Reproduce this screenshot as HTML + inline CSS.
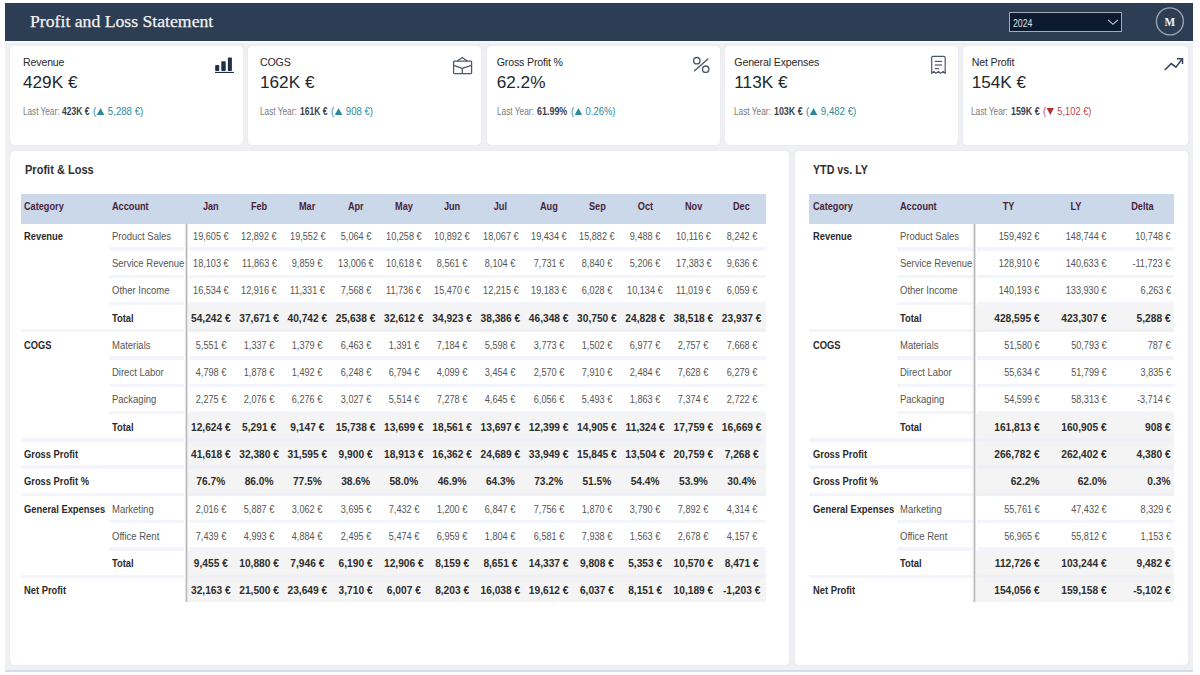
<!DOCTYPE html>
<html><head><meta charset="utf-8"><title>Profit and Loss Statement</title>
<style>
html,body{margin:0;padding:0;background:#ffffff;width:1200px;height:675px;overflow:hidden;}
body{position:relative;font-family:"Liberation Sans", sans-serif;}
div{position:absolute;box-sizing:border-box;white-space:nowrap;}
.frame{left:5px;top:3px;width:1188px;height:669px;background:#eef0f3;}
.fline{left:5px;top:670px;width:1188px;height:2px;background:#d4dee7;}
.header{left:5px;top:3px;width:1188px;height:38px;background:#2d3e54;}
.hstrip{left:5px;top:41px;width:1188px;height:2px;background:#f5f6f8;}
.title{left:30px;top:10px;font-family:"Liberation Serif", serif;font-size:17.7px;color:#f2f2f2;line-height:22px;-webkit-text-stroke:0.25px #f2f2f2;}
.dd{left:1009px;top:12px;width:113px;height:20px;background:#0c1a2f;border:1px solid #a3abb6;}
.ddt{left:1013px;top:16.6px;font-size:10.2px;color:#dde1e6;line-height:14px;}
.av{left:1155.8px;top:7.5px;width:28.5px;height:28.5px;border:1px solid #b9bfc8;border-radius:50%;}
.avt{left:1162.8px;top:14.2px;width:14px;text-align:center;font-family:"Liberation Serif", serif;font-weight:bold;font-size:12.5px;color:#f4f4f4;line-height:16px;}
.card{background:#ffffff;border-radius:4px;box-shadow:0 0 1px rgba(60,70,90,0.16);}
.panel{background:#ffffff;border-radius:4px;box-shadow:0 0 1px rgba(60,70,90,0.16);}
.kl{font-size:10.6px;color:#2a2a2a;line-height:14px;letter-spacing:-0.15px;}
.kv{font-size:17.2px;color:#222831;line-height:22px;}
.kly{font-size:10.2px;color:#7a7a7a;line-height:12px;}
.kly.kb{color:#3b414b;font-weight:bold;}
.kly.up{color:#2e8a98;}
.kly.dn{color:#c04545;}
.tu{display:inline-block;width:0;height:0;border-left:4px solid transparent;border-right:4px solid transparent;border-bottom:7px solid #2b8a99;margin:0 1px 0 0.5px;}
.td{display:inline-block;width:0;height:0;border-left:4px solid transparent;border-right:4px solid transparent;border-top:7px solid #b83232;margin:0 1px 0 0.5px;}
.ptitle{font-size:12px;font-weight:bold;color:#303030;line-height:16px;}
.hbg{background:#cad8ea;}
.ht{font-size:10.2px;font-weight:bold;color:#4a1f38;}
.bl{font-size:10px;font-weight:bold;color:#2b2b2b;}
.rl{font-size:10.1px;color:#555555;}
.rv{font-size:10.2px;color:#555555;}
.bv{font-size:10.2px;font-weight:bold;color:#2e2e2e;}
.vc{text-align:center;}
.vr{text-align:right;}
.gbg{background:#f4f4f4;}
.sep{background:#f4f5fc;}
.sepg{background:#eff0f7;}
.vl{width:3px;background:linear-gradient(90deg,#e3e3e3 0,#e3e3e3 1px,#b9b9b9 1px,#b9b9b9 2px,#e3e3e3 2px,#e3e3e3 3px);}
</style></head><body>
<div class="frame"></div>
<div class="fline"></div>
<div class="header"></div>
<div class="hstrip"></div>
<div class="title">Profit and Loss Statement</div>
<div class="dd"></div>
<div class="ddt"><span style="display:inline-block;transform:scaleX(0.86);transform-origin:left center">2024</span></div>
<svg width="1200" height="675" style="position:absolute;left:0;top:0"><polyline points="1108,19.8 1113,24.3 1118,19.8" fill="none" stroke="#c9ced6" stroke-width="1.1"/></svg>
<svg width="1200" height="675" style="position:absolute;left:0;top:0"><circle cx="1169.9" cy="21.4" r="13.5" fill="none" stroke="#9aa3ae" stroke-width="1.4"/></svg>
<div class="avt"><span style="display:inline-block;transform:scaleX(0.9)">M</span></div>
<div class="card" style="left:10px;top:46px;width:233.1px;height:99px"></div>
<div class="kl" style="left:23px;top:55px">Revenue</div>
<div class="kv" style="left:23px;top:71px">429K €</div>
<div class="kly" style="left:22.9px;top:105.6px"><span style="display:inline-block;transform:scaleX(0.8030);transform-origin:left center">Last Year:</span></div>
<div class="kly kb" style="left:62.3px;top:105.6px"><span style="display:inline-block;transform:scaleX(0.8339);transform-origin:left center">423K €</span></div>
<div class="kly up" style="left:93.2px;top:105.6px"><span style="display:inline-block;transform:scaleX(0.9449);transform-origin:left center">(<i class="tu"></i> 5,288 €)</span></div>
<svg width="1200" height="675" style="position:absolute;left:0;top:0"><g fill="#1f2f47"><rect x="215.2" y="64.9" width="4" height="6.2" rx="0.8"/><rect x="221.3" y="61.3" width="4.4" height="9.8" rx="0.8"/><rect x="227.9" y="57.6" width="4" height="13.5" rx="0.8"/><rect x="215" y="71.9" width="18.9" height="1.1"/></g></svg>
<div class="card" style="left:248.2px;top:46px;width:233.1px;height:99px"></div>
<div class="kl" style="left:260px;top:55px">COGS</div>
<div class="kv" style="left:260px;top:71px">162K €</div>
<div class="kly" style="left:260px;top:105.6px"><span style="display:inline-block;transform:scaleX(0.8097);transform-origin:left center">Last Year:</span></div>
<div class="kly kb" style="left:300.2px;top:105.6px"><span style="display:inline-block;transform:scaleX(0.8339);transform-origin:left center">161K €</span></div>
<div class="kly up" style="left:331.1px;top:105.6px"><span style="display:inline-block;transform:scaleX(0.9412);transform-origin:left center">(<i class="tu"></i> 908 €)</span></div>
<svg width="1200" height="675" style="position:absolute;left:0;top:0"><g fill="none" stroke="#4d5869" stroke-width="1.25" stroke-linejoin="round"><rect x="453.6" y="61.1" width="18" height="12.5" rx="0.8"/><polyline points="457.2,61.1 462.3,57.4 467.2,61.1"/><polyline points="453.6,65.3 462.3,68.3 471.6,65.3"/><line x1="462.3" y1="68.3" x2="462.3" y2="73.6"/></g></svg>
<div class="card" style="left:486.7px;top:46px;width:233.2px;height:99px"></div>
<div class="kl" style="left:496.7px;top:55px">Gross Profit %</div>
<div class="kv" style="left:496.7px;top:71px">62.2%</div>
<div class="kly" style="left:497px;top:105.6px"><span style="display:inline-block;transform:scaleX(0.8119);transform-origin:left center">Last Year:</span></div>
<div class="kly kb" style="left:536.7px;top:105.6px"><span style="display:inline-block;transform:scaleX(0.8767);transform-origin:left center">61.99%</span></div>
<div class="kly up" style="left:570.5px;top:105.6px"><span style="display:inline-block;transform:scaleX(0.9247);transform-origin:left center">(<i class="tu"></i> 0.26%)</span></div>
<svg width="1200" height="675" style="position:absolute;left:0;top:0"><g fill="none" stroke="#4d5869" stroke-width="1.35"><circle cx="696.8" cy="60.7" r="3.2"/><circle cx="705.7" cy="69.2" r="3.2"/><line x1="694.6" y1="70.7" x2="707.9" y2="58.9" stroke-linecap="round"/></g></svg>
<div class="card" style="left:724.8px;top:46px;width:233.4px;height:99px"></div>
<div class="kl" style="left:734.3px;top:55px">General Expenses</div>
<div class="kv" style="left:734.3px;top:71px">113K €</div>
<div class="kly" style="left:734.4px;top:105.6px"><span style="display:inline-block;transform:scaleX(0.8119);transform-origin:left center">Last Year:</span></div>
<div class="kly kb" style="left:774.1px;top:105.6px"><span style="display:inline-block;transform:scaleX(0.8704);transform-origin:left center">103K €</span></div>
<div class="kly up" style="left:805.6px;top:105.6px"><span style="display:inline-block;transform:scaleX(0.9449);transform-origin:left center">(<i class="tu"></i> 9,482 €)</span></div>
<svg width="1200" height="675" style="position:absolute;left:0;top:0"><g fill="none" stroke="#4d5869" stroke-width="1.2"><path d="M931.7 73.4 V57.6 Q931.7 56.4 932.9 56.4 H944 Q945.2 56.4 945.2 57.6 V73.4 L943.1 71.4 L940.6 73.4 L938.5 71.4 L936 73.4 L933.8 71.4 Z" stroke-linejoin="round"/><line x1="934.8" y1="61.4" x2="942" y2="61.4"/><line x1="934.8" y1="65" x2="942" y2="65"/><line x1="934.8" y1="68.6" x2="939" y2="68.6"/></g></svg>
<div class="card" style="left:963.1px;top:46px;width:225.3px;height:99px"></div>
<div class="kl" style="left:971.7px;top:55px">Net Profit</div>
<div class="kv" style="left:971.7px;top:71px">154K €</div>
<div class="kly" style="left:971.4px;top:105.6px"><span style="display:inline-block;transform:scaleX(0.8119);transform-origin:left center">Last Year:</span></div>
<div class="kly kb" style="left:1011.1px;top:105.6px"><span style="display:inline-block;transform:scaleX(0.8704);transform-origin:left center">159K €</span></div>
<div class="kly dn" style="left:1042.6px;top:105.6px"><span style="display:inline-block;transform:scaleX(0.9111);transform-origin:left center">(<i class="td"></i> 5,102 €)</span></div>
<svg width="1200" height="675" style="position:absolute;left:0;top:0"><g fill="none" stroke="#38455a" stroke-width="1.5" stroke-linejoin="miter"><polyline points="1164.8,70 1171.2,63.6 1175.9,67.1 1182.2,59"/><polyline points="1177,58.7 1182.5,58.7 1182.5,64"/></g></svg>
<div class="panel" style="left:10px;top:151px;width:779px;height:514px"></div>
<div class="panel" style="left:795px;top:151px;width:393px;height:514px"></div>
<div class="ptitle" style="left:24.6px;top:162px"><span style="display:inline-block;transform:scaleX(0.92);transform-origin:left center">Profit &amp; Loss</span></div>
<div class="ptitle" style="left:812.8px;top:162px"><span style="display:inline-block;transform:scaleX(0.89);transform-origin:left center">YTD vs. LY</span></div>
<div class="hbg" style="left:20.8px;top:194px;width:745.4px;height:29.8px"></div>
<div class="ht" style="left:24.2px;top:192.4px;height:29.4px;line-height:29.4px;text-align:left"><span style="display:inline-block;transform:scaleX(0.9);transform-origin:left center;">Category</span></div>
<div class="ht" style="left:112px;top:192.4px;height:29.4px;line-height:29.4px;text-align:left"><span style="display:inline-block;transform:scaleX(0.9);transform-origin:left center;">Account</span></div>
<div class="ht" style="left:186.7px;top:192.4px;width:48.26px;height:29.4px;line-height:29.4px;text-align:center"><span style="display:inline-block;transform:scaleX(0.9);transform-origin:center center;">Jan</span></div>
<div class="ht" style="left:234.96px;top:192.4px;width:48.26px;height:29.4px;line-height:29.4px;text-align:center"><span style="display:inline-block;transform:scaleX(0.9);transform-origin:center center;">Feb</span></div>
<div class="ht" style="left:283.22px;top:192.4px;width:48.26px;height:29.4px;line-height:29.4px;text-align:center"><span style="display:inline-block;transform:scaleX(0.9);transform-origin:center center;">Mar</span></div>
<div class="ht" style="left:331.48px;top:192.4px;width:48.26px;height:29.4px;line-height:29.4px;text-align:center"><span style="display:inline-block;transform:scaleX(0.9);transform-origin:center center;">Apr</span></div>
<div class="ht" style="left:379.74px;top:192.4px;width:48.26px;height:29.4px;line-height:29.4px;text-align:center"><span style="display:inline-block;transform:scaleX(0.9);transform-origin:center center;">May</span></div>
<div class="ht" style="left:428px;top:192.4px;width:48.26px;height:29.4px;line-height:29.4px;text-align:center"><span style="display:inline-block;transform:scaleX(0.9);transform-origin:center center;">Jun</span></div>
<div class="ht" style="left:476.26px;top:192.4px;width:48.26px;height:29.4px;line-height:29.4px;text-align:center"><span style="display:inline-block;transform:scaleX(0.9);transform-origin:center center;">Jul</span></div>
<div class="ht" style="left:524.52px;top:192.4px;width:48.26px;height:29.4px;line-height:29.4px;text-align:center"><span style="display:inline-block;transform:scaleX(0.9);transform-origin:center center;">Aug</span></div>
<div class="ht" style="left:572.78px;top:192.4px;width:48.26px;height:29.4px;line-height:29.4px;text-align:center"><span style="display:inline-block;transform:scaleX(0.9);transform-origin:center center;">Sep</span></div>
<div class="ht" style="left:621.04px;top:192.4px;width:48.26px;height:29.4px;line-height:29.4px;text-align:center"><span style="display:inline-block;transform:scaleX(0.9);transform-origin:center center;">Oct</span></div>
<div class="ht" style="left:669.3px;top:192.4px;width:48.26px;height:29.4px;line-height:29.4px;text-align:center"><span style="display:inline-block;transform:scaleX(0.9);transform-origin:center center;">Nov</span></div>
<div class="ht" style="left:717.56px;top:192.4px;width:48.26px;height:29.4px;line-height:29.4px;text-align:center"><span style="display:inline-block;transform:scaleX(0.9);transform-origin:center center;">Dec</span></div>
<div class="sep" style="left:109px;top:247.27px;width:74.8px;height:3.4px"></div>
<div class="sep" style="left:188.8px;top:247.27px;width:577.4px;height:3.4px"></div>
<div class="bl" style="left:24.2px;top:224.8px;height:23.87px;line-height:23.87px;text-align:left"><span style="display:inline-block;transform:scaleX(0.935);transform-origin:left center;">Revenue</span></div>
<div class="rl" style="left:112px;top:224.8px;height:23.87px;line-height:23.87px;text-align:left"><span style="display:inline-block;transform:scaleX(0.94);transform-origin:left center;">Product Sales</span></div>
<div class="rv" style="left:186.7px;top:224.8px;width:48.26px;height:23.87px;line-height:23.87px;text-align:center"><span style="display:inline-block;transform:scaleX(0.895);transform-origin:center center;">19,605 €</span></div>
<div class="rv" style="left:234.96px;top:224.8px;width:48.26px;height:23.87px;line-height:23.87px;text-align:center"><span style="display:inline-block;transform:scaleX(0.895);transform-origin:center center;">12,892 €</span></div>
<div class="rv" style="left:283.22px;top:224.8px;width:48.26px;height:23.87px;line-height:23.87px;text-align:center"><span style="display:inline-block;transform:scaleX(0.895);transform-origin:center center;">19,552 €</span></div>
<div class="rv" style="left:331.48px;top:224.8px;width:48.26px;height:23.87px;line-height:23.87px;text-align:center"><span style="display:inline-block;transform:scaleX(0.895);transform-origin:center center;">5,064 €</span></div>
<div class="rv" style="left:379.74px;top:224.8px;width:48.26px;height:23.87px;line-height:23.87px;text-align:center"><span style="display:inline-block;transform:scaleX(0.895);transform-origin:center center;">10,258 €</span></div>
<div class="rv" style="left:428px;top:224.8px;width:48.26px;height:23.87px;line-height:23.87px;text-align:center"><span style="display:inline-block;transform:scaleX(0.895);transform-origin:center center;">10,892 €</span></div>
<div class="rv" style="left:476.26px;top:224.8px;width:48.26px;height:23.87px;line-height:23.87px;text-align:center"><span style="display:inline-block;transform:scaleX(0.895);transform-origin:center center;">18,067 €</span></div>
<div class="rv" style="left:524.52px;top:224.8px;width:48.26px;height:23.87px;line-height:23.87px;text-align:center"><span style="display:inline-block;transform:scaleX(0.895);transform-origin:center center;">19,434 €</span></div>
<div class="rv" style="left:572.78px;top:224.8px;width:48.26px;height:23.87px;line-height:23.87px;text-align:center"><span style="display:inline-block;transform:scaleX(0.895);transform-origin:center center;">15,882 €</span></div>
<div class="rv" style="left:621.04px;top:224.8px;width:48.26px;height:23.87px;line-height:23.87px;text-align:center"><span style="display:inline-block;transform:scaleX(0.895);transform-origin:center center;">9,488 €</span></div>
<div class="rv" style="left:669.3px;top:224.8px;width:48.26px;height:23.87px;line-height:23.87px;text-align:center"><span style="display:inline-block;transform:scaleX(0.895);transform-origin:center center;">10,116 €</span></div>
<div class="rv" style="left:717.56px;top:224.8px;width:48.26px;height:23.87px;line-height:23.87px;text-align:center"><span style="display:inline-block;transform:scaleX(0.895);transform-origin:center center;">8,242 €</span></div>
<div class="sep" style="left:109px;top:274.54px;width:74.8px;height:3.4px"></div>
<div class="sep" style="left:188.8px;top:274.54px;width:577.4px;height:3.4px"></div>
<div class="rl" style="left:112px;top:252.07px;height:23.87px;line-height:23.87px;text-align:left"><span style="display:inline-block;transform:scaleX(0.94);transform-origin:left center;">Service Revenue</span></div>
<div class="rv" style="left:186.7px;top:252.07px;width:48.26px;height:23.87px;line-height:23.87px;text-align:center"><span style="display:inline-block;transform:scaleX(0.895);transform-origin:center center;">18,103 €</span></div>
<div class="rv" style="left:234.96px;top:252.07px;width:48.26px;height:23.87px;line-height:23.87px;text-align:center"><span style="display:inline-block;transform:scaleX(0.895);transform-origin:center center;">11,863 €</span></div>
<div class="rv" style="left:283.22px;top:252.07px;width:48.26px;height:23.87px;line-height:23.87px;text-align:center"><span style="display:inline-block;transform:scaleX(0.895);transform-origin:center center;">9,859 €</span></div>
<div class="rv" style="left:331.48px;top:252.07px;width:48.26px;height:23.87px;line-height:23.87px;text-align:center"><span style="display:inline-block;transform:scaleX(0.895);transform-origin:center center;">13,006 €</span></div>
<div class="rv" style="left:379.74px;top:252.07px;width:48.26px;height:23.87px;line-height:23.87px;text-align:center"><span style="display:inline-block;transform:scaleX(0.895);transform-origin:center center;">10,618 €</span></div>
<div class="rv" style="left:428px;top:252.07px;width:48.26px;height:23.87px;line-height:23.87px;text-align:center"><span style="display:inline-block;transform:scaleX(0.895);transform-origin:center center;">8,561 €</span></div>
<div class="rv" style="left:476.26px;top:252.07px;width:48.26px;height:23.87px;line-height:23.87px;text-align:center"><span style="display:inline-block;transform:scaleX(0.895);transform-origin:center center;">8,104 €</span></div>
<div class="rv" style="left:524.52px;top:252.07px;width:48.26px;height:23.87px;line-height:23.87px;text-align:center"><span style="display:inline-block;transform:scaleX(0.895);transform-origin:center center;">7,731 €</span></div>
<div class="rv" style="left:572.78px;top:252.07px;width:48.26px;height:23.87px;line-height:23.87px;text-align:center"><span style="display:inline-block;transform:scaleX(0.895);transform-origin:center center;">8,840 €</span></div>
<div class="rv" style="left:621.04px;top:252.07px;width:48.26px;height:23.87px;line-height:23.87px;text-align:center"><span style="display:inline-block;transform:scaleX(0.895);transform-origin:center center;">5,206 €</span></div>
<div class="rv" style="left:669.3px;top:252.07px;width:48.26px;height:23.87px;line-height:23.87px;text-align:center"><span style="display:inline-block;transform:scaleX(0.895);transform-origin:center center;">17,383 €</span></div>
<div class="rv" style="left:717.56px;top:252.07px;width:48.26px;height:23.87px;line-height:23.87px;text-align:center"><span style="display:inline-block;transform:scaleX(0.895);transform-origin:center center;">9,636 €</span></div>
<div class="sep" style="left:109px;top:301.81px;width:74.8px;height:3.4px"></div>
<div class="sep" style="left:188.8px;top:301.81px;width:577.4px;height:3.4px"></div>
<div class="rl" style="left:112px;top:279.34px;height:23.87px;line-height:23.87px;text-align:left"><span style="display:inline-block;transform:scaleX(0.94);transform-origin:left center;">Other Income</span></div>
<div class="rv" style="left:186.7px;top:279.34px;width:48.26px;height:23.87px;line-height:23.87px;text-align:center"><span style="display:inline-block;transform:scaleX(0.895);transform-origin:center center;">16,534 €</span></div>
<div class="rv" style="left:234.96px;top:279.34px;width:48.26px;height:23.87px;line-height:23.87px;text-align:center"><span style="display:inline-block;transform:scaleX(0.895);transform-origin:center center;">12,916 €</span></div>
<div class="rv" style="left:283.22px;top:279.34px;width:48.26px;height:23.87px;line-height:23.87px;text-align:center"><span style="display:inline-block;transform:scaleX(0.895);transform-origin:center center;">11,331 €</span></div>
<div class="rv" style="left:331.48px;top:279.34px;width:48.26px;height:23.87px;line-height:23.87px;text-align:center"><span style="display:inline-block;transform:scaleX(0.895);transform-origin:center center;">7,568 €</span></div>
<div class="rv" style="left:379.74px;top:279.34px;width:48.26px;height:23.87px;line-height:23.87px;text-align:center"><span style="display:inline-block;transform:scaleX(0.895);transform-origin:center center;">11,736 €</span></div>
<div class="rv" style="left:428px;top:279.34px;width:48.26px;height:23.87px;line-height:23.87px;text-align:center"><span style="display:inline-block;transform:scaleX(0.895);transform-origin:center center;">15,470 €</span></div>
<div class="rv" style="left:476.26px;top:279.34px;width:48.26px;height:23.87px;line-height:23.87px;text-align:center"><span style="display:inline-block;transform:scaleX(0.895);transform-origin:center center;">12,215 €</span></div>
<div class="rv" style="left:524.52px;top:279.34px;width:48.26px;height:23.87px;line-height:23.87px;text-align:center"><span style="display:inline-block;transform:scaleX(0.895);transform-origin:center center;">19,183 €</span></div>
<div class="rv" style="left:572.78px;top:279.34px;width:48.26px;height:23.87px;line-height:23.87px;text-align:center"><span style="display:inline-block;transform:scaleX(0.895);transform-origin:center center;">6,028 €</span></div>
<div class="rv" style="left:621.04px;top:279.34px;width:48.26px;height:23.87px;line-height:23.87px;text-align:center"><span style="display:inline-block;transform:scaleX(0.895);transform-origin:center center;">10,134 €</span></div>
<div class="rv" style="left:669.3px;top:279.34px;width:48.26px;height:23.87px;line-height:23.87px;text-align:center"><span style="display:inline-block;transform:scaleX(0.895);transform-origin:center center;">11,019 €</span></div>
<div class="rv" style="left:717.56px;top:279.34px;width:48.26px;height:23.87px;line-height:23.87px;text-align:center"><span style="display:inline-block;transform:scaleX(0.895);transform-origin:center center;">6,059 €</span></div>
<div class="gbg" style="left:187.1px;top:305.21px;width:579.1px;height:27.27px"></div>
<div class="sep" style="left:20.8px;top:329.08px;width:163px;height:3.4px"></div>
<div class="sepg" style="left:188.8px;top:329.08px;width:577.4px;height:3.4px"></div>
<div class="bl" style="left:112px;top:306.61px;height:23.87px;line-height:23.87px;text-align:left"><span style="display:inline-block;transform:scaleX(0.935);transform-origin:left center;">Total</span></div>
<div class="bv" style="left:186.7px;top:306.61px;width:48.26px;height:23.87px;line-height:23.87px;text-align:center"><span style="display:inline-block;">54,242 €</span></div>
<div class="bv" style="left:234.96px;top:306.61px;width:48.26px;height:23.87px;line-height:23.87px;text-align:center"><span style="display:inline-block;">37,671 €</span></div>
<div class="bv" style="left:283.22px;top:306.61px;width:48.26px;height:23.87px;line-height:23.87px;text-align:center"><span style="display:inline-block;">40,742 €</span></div>
<div class="bv" style="left:331.48px;top:306.61px;width:48.26px;height:23.87px;line-height:23.87px;text-align:center"><span style="display:inline-block;">25,638 €</span></div>
<div class="bv" style="left:379.74px;top:306.61px;width:48.26px;height:23.87px;line-height:23.87px;text-align:center"><span style="display:inline-block;">32,612 €</span></div>
<div class="bv" style="left:428px;top:306.61px;width:48.26px;height:23.87px;line-height:23.87px;text-align:center"><span style="display:inline-block;">34,923 €</span></div>
<div class="bv" style="left:476.26px;top:306.61px;width:48.26px;height:23.87px;line-height:23.87px;text-align:center"><span style="display:inline-block;">38,386 €</span></div>
<div class="bv" style="left:524.52px;top:306.61px;width:48.26px;height:23.87px;line-height:23.87px;text-align:center"><span style="display:inline-block;">46,348 €</span></div>
<div class="bv" style="left:572.78px;top:306.61px;width:48.26px;height:23.87px;line-height:23.87px;text-align:center"><span style="display:inline-block;">30,750 €</span></div>
<div class="bv" style="left:621.04px;top:306.61px;width:48.26px;height:23.87px;line-height:23.87px;text-align:center"><span style="display:inline-block;">24,828 €</span></div>
<div class="bv" style="left:669.3px;top:306.61px;width:48.26px;height:23.87px;line-height:23.87px;text-align:center"><span style="display:inline-block;">38,518 €</span></div>
<div class="bv" style="left:717.56px;top:306.61px;width:48.26px;height:23.87px;line-height:23.87px;text-align:center"><span style="display:inline-block;">23,937 €</span></div>
<div class="sep" style="left:109px;top:356.35px;width:74.8px;height:3.4px"></div>
<div class="sep" style="left:188.8px;top:356.35px;width:577.4px;height:3.4px"></div>
<div class="bl" style="left:24.2px;top:333.88px;height:23.87px;line-height:23.87px;text-align:left"><span style="display:inline-block;transform:scaleX(0.935);transform-origin:left center;">COGS</span></div>
<div class="rl" style="left:112px;top:333.88px;height:23.87px;line-height:23.87px;text-align:left"><span style="display:inline-block;transform:scaleX(0.94);transform-origin:left center;">Materials</span></div>
<div class="rv" style="left:186.7px;top:333.88px;width:48.26px;height:23.87px;line-height:23.87px;text-align:center"><span style="display:inline-block;transform:scaleX(0.895);transform-origin:center center;">5,551 €</span></div>
<div class="rv" style="left:234.96px;top:333.88px;width:48.26px;height:23.87px;line-height:23.87px;text-align:center"><span style="display:inline-block;transform:scaleX(0.895);transform-origin:center center;">1,337 €</span></div>
<div class="rv" style="left:283.22px;top:333.88px;width:48.26px;height:23.87px;line-height:23.87px;text-align:center"><span style="display:inline-block;transform:scaleX(0.895);transform-origin:center center;">1,379 €</span></div>
<div class="rv" style="left:331.48px;top:333.88px;width:48.26px;height:23.87px;line-height:23.87px;text-align:center"><span style="display:inline-block;transform:scaleX(0.895);transform-origin:center center;">6,463 €</span></div>
<div class="rv" style="left:379.74px;top:333.88px;width:48.26px;height:23.87px;line-height:23.87px;text-align:center"><span style="display:inline-block;transform:scaleX(0.895);transform-origin:center center;">1,391 €</span></div>
<div class="rv" style="left:428px;top:333.88px;width:48.26px;height:23.87px;line-height:23.87px;text-align:center"><span style="display:inline-block;transform:scaleX(0.895);transform-origin:center center;">7,184 €</span></div>
<div class="rv" style="left:476.26px;top:333.88px;width:48.26px;height:23.87px;line-height:23.87px;text-align:center"><span style="display:inline-block;transform:scaleX(0.895);transform-origin:center center;">5,598 €</span></div>
<div class="rv" style="left:524.52px;top:333.88px;width:48.26px;height:23.87px;line-height:23.87px;text-align:center"><span style="display:inline-block;transform:scaleX(0.895);transform-origin:center center;">3,773 €</span></div>
<div class="rv" style="left:572.78px;top:333.88px;width:48.26px;height:23.87px;line-height:23.87px;text-align:center"><span style="display:inline-block;transform:scaleX(0.895);transform-origin:center center;">1,502 €</span></div>
<div class="rv" style="left:621.04px;top:333.88px;width:48.26px;height:23.87px;line-height:23.87px;text-align:center"><span style="display:inline-block;transform:scaleX(0.895);transform-origin:center center;">6,977 €</span></div>
<div class="rv" style="left:669.3px;top:333.88px;width:48.26px;height:23.87px;line-height:23.87px;text-align:center"><span style="display:inline-block;transform:scaleX(0.895);transform-origin:center center;">2,757 €</span></div>
<div class="rv" style="left:717.56px;top:333.88px;width:48.26px;height:23.87px;line-height:23.87px;text-align:center"><span style="display:inline-block;transform:scaleX(0.895);transform-origin:center center;">7,668 €</span></div>
<div class="sep" style="left:109px;top:383.62px;width:74.8px;height:3.4px"></div>
<div class="sep" style="left:188.8px;top:383.62px;width:577.4px;height:3.4px"></div>
<div class="rl" style="left:112px;top:361.15px;height:23.87px;line-height:23.87px;text-align:left"><span style="display:inline-block;transform:scaleX(0.94);transform-origin:left center;">Direct Labor</span></div>
<div class="rv" style="left:186.7px;top:361.15px;width:48.26px;height:23.87px;line-height:23.87px;text-align:center"><span style="display:inline-block;transform:scaleX(0.895);transform-origin:center center;">4,798 €</span></div>
<div class="rv" style="left:234.96px;top:361.15px;width:48.26px;height:23.87px;line-height:23.87px;text-align:center"><span style="display:inline-block;transform:scaleX(0.895);transform-origin:center center;">1,878 €</span></div>
<div class="rv" style="left:283.22px;top:361.15px;width:48.26px;height:23.87px;line-height:23.87px;text-align:center"><span style="display:inline-block;transform:scaleX(0.895);transform-origin:center center;">1,492 €</span></div>
<div class="rv" style="left:331.48px;top:361.15px;width:48.26px;height:23.87px;line-height:23.87px;text-align:center"><span style="display:inline-block;transform:scaleX(0.895);transform-origin:center center;">6,248 €</span></div>
<div class="rv" style="left:379.74px;top:361.15px;width:48.26px;height:23.87px;line-height:23.87px;text-align:center"><span style="display:inline-block;transform:scaleX(0.895);transform-origin:center center;">6,794 €</span></div>
<div class="rv" style="left:428px;top:361.15px;width:48.26px;height:23.87px;line-height:23.87px;text-align:center"><span style="display:inline-block;transform:scaleX(0.895);transform-origin:center center;">4,099 €</span></div>
<div class="rv" style="left:476.26px;top:361.15px;width:48.26px;height:23.87px;line-height:23.87px;text-align:center"><span style="display:inline-block;transform:scaleX(0.895);transform-origin:center center;">3,454 €</span></div>
<div class="rv" style="left:524.52px;top:361.15px;width:48.26px;height:23.87px;line-height:23.87px;text-align:center"><span style="display:inline-block;transform:scaleX(0.895);transform-origin:center center;">2,570 €</span></div>
<div class="rv" style="left:572.78px;top:361.15px;width:48.26px;height:23.87px;line-height:23.87px;text-align:center"><span style="display:inline-block;transform:scaleX(0.895);transform-origin:center center;">7,910 €</span></div>
<div class="rv" style="left:621.04px;top:361.15px;width:48.26px;height:23.87px;line-height:23.87px;text-align:center"><span style="display:inline-block;transform:scaleX(0.895);transform-origin:center center;">2,484 €</span></div>
<div class="rv" style="left:669.3px;top:361.15px;width:48.26px;height:23.87px;line-height:23.87px;text-align:center"><span style="display:inline-block;transform:scaleX(0.895);transform-origin:center center;">7,628 €</span></div>
<div class="rv" style="left:717.56px;top:361.15px;width:48.26px;height:23.87px;line-height:23.87px;text-align:center"><span style="display:inline-block;transform:scaleX(0.895);transform-origin:center center;">6,279 €</span></div>
<div class="sep" style="left:109px;top:410.89px;width:74.8px;height:3.4px"></div>
<div class="sep" style="left:188.8px;top:410.89px;width:577.4px;height:3.4px"></div>
<div class="rl" style="left:112px;top:388.42px;height:23.87px;line-height:23.87px;text-align:left"><span style="display:inline-block;transform:scaleX(0.94);transform-origin:left center;">Packaging</span></div>
<div class="rv" style="left:186.7px;top:388.42px;width:48.26px;height:23.87px;line-height:23.87px;text-align:center"><span style="display:inline-block;transform:scaleX(0.895);transform-origin:center center;">2,275 €</span></div>
<div class="rv" style="left:234.96px;top:388.42px;width:48.26px;height:23.87px;line-height:23.87px;text-align:center"><span style="display:inline-block;transform:scaleX(0.895);transform-origin:center center;">2,076 €</span></div>
<div class="rv" style="left:283.22px;top:388.42px;width:48.26px;height:23.87px;line-height:23.87px;text-align:center"><span style="display:inline-block;transform:scaleX(0.895);transform-origin:center center;">6,276 €</span></div>
<div class="rv" style="left:331.48px;top:388.42px;width:48.26px;height:23.87px;line-height:23.87px;text-align:center"><span style="display:inline-block;transform:scaleX(0.895);transform-origin:center center;">3,027 €</span></div>
<div class="rv" style="left:379.74px;top:388.42px;width:48.26px;height:23.87px;line-height:23.87px;text-align:center"><span style="display:inline-block;transform:scaleX(0.895);transform-origin:center center;">5,514 €</span></div>
<div class="rv" style="left:428px;top:388.42px;width:48.26px;height:23.87px;line-height:23.87px;text-align:center"><span style="display:inline-block;transform:scaleX(0.895);transform-origin:center center;">7,278 €</span></div>
<div class="rv" style="left:476.26px;top:388.42px;width:48.26px;height:23.87px;line-height:23.87px;text-align:center"><span style="display:inline-block;transform:scaleX(0.895);transform-origin:center center;">4,645 €</span></div>
<div class="rv" style="left:524.52px;top:388.42px;width:48.26px;height:23.87px;line-height:23.87px;text-align:center"><span style="display:inline-block;transform:scaleX(0.895);transform-origin:center center;">6,056 €</span></div>
<div class="rv" style="left:572.78px;top:388.42px;width:48.26px;height:23.87px;line-height:23.87px;text-align:center"><span style="display:inline-block;transform:scaleX(0.895);transform-origin:center center;">5,493 €</span></div>
<div class="rv" style="left:621.04px;top:388.42px;width:48.26px;height:23.87px;line-height:23.87px;text-align:center"><span style="display:inline-block;transform:scaleX(0.895);transform-origin:center center;">1,863 €</span></div>
<div class="rv" style="left:669.3px;top:388.42px;width:48.26px;height:23.87px;line-height:23.87px;text-align:center"><span style="display:inline-block;transform:scaleX(0.895);transform-origin:center center;">7,374 €</span></div>
<div class="rv" style="left:717.56px;top:388.42px;width:48.26px;height:23.87px;line-height:23.87px;text-align:center"><span style="display:inline-block;transform:scaleX(0.895);transform-origin:center center;">2,722 €</span></div>
<div class="gbg" style="left:187.1px;top:414.29px;width:579.1px;height:27.27px"></div>
<div class="sep" style="left:20.8px;top:438.16px;width:163px;height:3.4px"></div>
<div class="sepg" style="left:188.8px;top:438.16px;width:577.4px;height:3.4px"></div>
<div class="bl" style="left:112px;top:415.69px;height:23.87px;line-height:23.87px;text-align:left"><span style="display:inline-block;transform:scaleX(0.935);transform-origin:left center;">Total</span></div>
<div class="bv" style="left:186.7px;top:415.69px;width:48.26px;height:23.87px;line-height:23.87px;text-align:center"><span style="display:inline-block;">12,624 €</span></div>
<div class="bv" style="left:234.96px;top:415.69px;width:48.26px;height:23.87px;line-height:23.87px;text-align:center"><span style="display:inline-block;">5,291 €</span></div>
<div class="bv" style="left:283.22px;top:415.69px;width:48.26px;height:23.87px;line-height:23.87px;text-align:center"><span style="display:inline-block;">9,147 €</span></div>
<div class="bv" style="left:331.48px;top:415.69px;width:48.26px;height:23.87px;line-height:23.87px;text-align:center"><span style="display:inline-block;">15,738 €</span></div>
<div class="bv" style="left:379.74px;top:415.69px;width:48.26px;height:23.87px;line-height:23.87px;text-align:center"><span style="display:inline-block;">13,699 €</span></div>
<div class="bv" style="left:428px;top:415.69px;width:48.26px;height:23.87px;line-height:23.87px;text-align:center"><span style="display:inline-block;">18,561 €</span></div>
<div class="bv" style="left:476.26px;top:415.69px;width:48.26px;height:23.87px;line-height:23.87px;text-align:center"><span style="display:inline-block;">13,697 €</span></div>
<div class="bv" style="left:524.52px;top:415.69px;width:48.26px;height:23.87px;line-height:23.87px;text-align:center"><span style="display:inline-block;">12,399 €</span></div>
<div class="bv" style="left:572.78px;top:415.69px;width:48.26px;height:23.87px;line-height:23.87px;text-align:center"><span style="display:inline-block;">14,905 €</span></div>
<div class="bv" style="left:621.04px;top:415.69px;width:48.26px;height:23.87px;line-height:23.87px;text-align:center"><span style="display:inline-block;">11,324 €</span></div>
<div class="bv" style="left:669.3px;top:415.69px;width:48.26px;height:23.87px;line-height:23.87px;text-align:center"><span style="display:inline-block;">17,759 €</span></div>
<div class="bv" style="left:717.56px;top:415.69px;width:48.26px;height:23.87px;line-height:23.87px;text-align:center"><span style="display:inline-block;">16,669 €</span></div>
<div class="gbg" style="left:187.1px;top:441.56px;width:579.1px;height:27.27px"></div>
<div class="sep" style="left:20.8px;top:465.43px;width:163px;height:3.4px"></div>
<div class="sepg" style="left:188.8px;top:465.43px;width:577.4px;height:3.4px"></div>
<div class="bl" style="left:24.2px;top:442.96px;height:23.87px;line-height:23.87px;text-align:left"><span style="display:inline-block;transform:scaleX(0.935);transform-origin:left center;">Gross Profit</span></div>
<div class="bv" style="left:186.7px;top:442.96px;width:48.26px;height:23.87px;line-height:23.87px;text-align:center"><span style="display:inline-block;">41,618 €</span></div>
<div class="bv" style="left:234.96px;top:442.96px;width:48.26px;height:23.87px;line-height:23.87px;text-align:center"><span style="display:inline-block;">32,380 €</span></div>
<div class="bv" style="left:283.22px;top:442.96px;width:48.26px;height:23.87px;line-height:23.87px;text-align:center"><span style="display:inline-block;">31,595 €</span></div>
<div class="bv" style="left:331.48px;top:442.96px;width:48.26px;height:23.87px;line-height:23.87px;text-align:center"><span style="display:inline-block;">9,900 €</span></div>
<div class="bv" style="left:379.74px;top:442.96px;width:48.26px;height:23.87px;line-height:23.87px;text-align:center"><span style="display:inline-block;">18,913 €</span></div>
<div class="bv" style="left:428px;top:442.96px;width:48.26px;height:23.87px;line-height:23.87px;text-align:center"><span style="display:inline-block;">16,362 €</span></div>
<div class="bv" style="left:476.26px;top:442.96px;width:48.26px;height:23.87px;line-height:23.87px;text-align:center"><span style="display:inline-block;">24,689 €</span></div>
<div class="bv" style="left:524.52px;top:442.96px;width:48.26px;height:23.87px;line-height:23.87px;text-align:center"><span style="display:inline-block;">33,949 €</span></div>
<div class="bv" style="left:572.78px;top:442.96px;width:48.26px;height:23.87px;line-height:23.87px;text-align:center"><span style="display:inline-block;">15,845 €</span></div>
<div class="bv" style="left:621.04px;top:442.96px;width:48.26px;height:23.87px;line-height:23.87px;text-align:center"><span style="display:inline-block;">13,504 €</span></div>
<div class="bv" style="left:669.3px;top:442.96px;width:48.26px;height:23.87px;line-height:23.87px;text-align:center"><span style="display:inline-block;">20,759 €</span></div>
<div class="bv" style="left:717.56px;top:442.96px;width:48.26px;height:23.87px;line-height:23.87px;text-align:center"><span style="display:inline-block;">7,268 €</span></div>
<div class="gbg" style="left:187.1px;top:468.83px;width:579.1px;height:27.27px"></div>
<div class="sep" style="left:20.8px;top:492.7px;width:163px;height:3.4px"></div>
<div class="sepg" style="left:188.8px;top:492.7px;width:577.4px;height:3.4px"></div>
<div class="bl" style="left:24.2px;top:470.23px;height:23.87px;line-height:23.87px;text-align:left"><span style="display:inline-block;transform:scaleX(0.935);transform-origin:left center;">Gross Profit %</span></div>
<div class="bv" style="left:186.7px;top:470.23px;width:48.26px;height:23.87px;line-height:23.87px;text-align:center"><span style="display:inline-block;">76.7%</span></div>
<div class="bv" style="left:234.96px;top:470.23px;width:48.26px;height:23.87px;line-height:23.87px;text-align:center"><span style="display:inline-block;">86.0%</span></div>
<div class="bv" style="left:283.22px;top:470.23px;width:48.26px;height:23.87px;line-height:23.87px;text-align:center"><span style="display:inline-block;">77.5%</span></div>
<div class="bv" style="left:331.48px;top:470.23px;width:48.26px;height:23.87px;line-height:23.87px;text-align:center"><span style="display:inline-block;">38.6%</span></div>
<div class="bv" style="left:379.74px;top:470.23px;width:48.26px;height:23.87px;line-height:23.87px;text-align:center"><span style="display:inline-block;">58.0%</span></div>
<div class="bv" style="left:428px;top:470.23px;width:48.26px;height:23.87px;line-height:23.87px;text-align:center"><span style="display:inline-block;">46.9%</span></div>
<div class="bv" style="left:476.26px;top:470.23px;width:48.26px;height:23.87px;line-height:23.87px;text-align:center"><span style="display:inline-block;">64.3%</span></div>
<div class="bv" style="left:524.52px;top:470.23px;width:48.26px;height:23.87px;line-height:23.87px;text-align:center"><span style="display:inline-block;">73.2%</span></div>
<div class="bv" style="left:572.78px;top:470.23px;width:48.26px;height:23.87px;line-height:23.87px;text-align:center"><span style="display:inline-block;">51.5%</span></div>
<div class="bv" style="left:621.04px;top:470.23px;width:48.26px;height:23.87px;line-height:23.87px;text-align:center"><span style="display:inline-block;">54.4%</span></div>
<div class="bv" style="left:669.3px;top:470.23px;width:48.26px;height:23.87px;line-height:23.87px;text-align:center"><span style="display:inline-block;">53.9%</span></div>
<div class="bv" style="left:717.56px;top:470.23px;width:48.26px;height:23.87px;line-height:23.87px;text-align:center"><span style="display:inline-block;">30.4%</span></div>
<div class="sep" style="left:109px;top:519.97px;width:74.8px;height:3.4px"></div>
<div class="sep" style="left:188.8px;top:519.97px;width:577.4px;height:3.4px"></div>
<div class="bl" style="left:24.2px;top:497.5px;height:23.87px;line-height:23.87px;text-align:left"><span style="display:inline-block;transform:scaleX(0.935);transform-origin:left center;">General Expenses</span></div>
<div class="rl" style="left:112px;top:497.5px;height:23.87px;line-height:23.87px;text-align:left"><span style="display:inline-block;transform:scaleX(0.94);transform-origin:left center;">Marketing</span></div>
<div class="rv" style="left:186.7px;top:497.5px;width:48.26px;height:23.87px;line-height:23.87px;text-align:center"><span style="display:inline-block;transform:scaleX(0.895);transform-origin:center center;">2,016 €</span></div>
<div class="rv" style="left:234.96px;top:497.5px;width:48.26px;height:23.87px;line-height:23.87px;text-align:center"><span style="display:inline-block;transform:scaleX(0.895);transform-origin:center center;">5,887 €</span></div>
<div class="rv" style="left:283.22px;top:497.5px;width:48.26px;height:23.87px;line-height:23.87px;text-align:center"><span style="display:inline-block;transform:scaleX(0.895);transform-origin:center center;">3,062 €</span></div>
<div class="rv" style="left:331.48px;top:497.5px;width:48.26px;height:23.87px;line-height:23.87px;text-align:center"><span style="display:inline-block;transform:scaleX(0.895);transform-origin:center center;">3,695 €</span></div>
<div class="rv" style="left:379.74px;top:497.5px;width:48.26px;height:23.87px;line-height:23.87px;text-align:center"><span style="display:inline-block;transform:scaleX(0.895);transform-origin:center center;">7,432 €</span></div>
<div class="rv" style="left:428px;top:497.5px;width:48.26px;height:23.87px;line-height:23.87px;text-align:center"><span style="display:inline-block;transform:scaleX(0.895);transform-origin:center center;">1,200 €</span></div>
<div class="rv" style="left:476.26px;top:497.5px;width:48.26px;height:23.87px;line-height:23.87px;text-align:center"><span style="display:inline-block;transform:scaleX(0.895);transform-origin:center center;">6,847 €</span></div>
<div class="rv" style="left:524.52px;top:497.5px;width:48.26px;height:23.87px;line-height:23.87px;text-align:center"><span style="display:inline-block;transform:scaleX(0.895);transform-origin:center center;">7,756 €</span></div>
<div class="rv" style="left:572.78px;top:497.5px;width:48.26px;height:23.87px;line-height:23.87px;text-align:center"><span style="display:inline-block;transform:scaleX(0.895);transform-origin:center center;">1,870 €</span></div>
<div class="rv" style="left:621.04px;top:497.5px;width:48.26px;height:23.87px;line-height:23.87px;text-align:center"><span style="display:inline-block;transform:scaleX(0.895);transform-origin:center center;">3,790 €</span></div>
<div class="rv" style="left:669.3px;top:497.5px;width:48.26px;height:23.87px;line-height:23.87px;text-align:center"><span style="display:inline-block;transform:scaleX(0.895);transform-origin:center center;">7,892 €</span></div>
<div class="rv" style="left:717.56px;top:497.5px;width:48.26px;height:23.87px;line-height:23.87px;text-align:center"><span style="display:inline-block;transform:scaleX(0.895);transform-origin:center center;">4,314 €</span></div>
<div class="sep" style="left:109px;top:547.24px;width:74.8px;height:3.4px"></div>
<div class="sep" style="left:188.8px;top:547.24px;width:577.4px;height:3.4px"></div>
<div class="rl" style="left:112px;top:524.77px;height:23.87px;line-height:23.87px;text-align:left"><span style="display:inline-block;transform:scaleX(0.94);transform-origin:left center;">Office Rent</span></div>
<div class="rv" style="left:186.7px;top:524.77px;width:48.26px;height:23.87px;line-height:23.87px;text-align:center"><span style="display:inline-block;transform:scaleX(0.895);transform-origin:center center;">7,439 €</span></div>
<div class="rv" style="left:234.96px;top:524.77px;width:48.26px;height:23.87px;line-height:23.87px;text-align:center"><span style="display:inline-block;transform:scaleX(0.895);transform-origin:center center;">4,993 €</span></div>
<div class="rv" style="left:283.22px;top:524.77px;width:48.26px;height:23.87px;line-height:23.87px;text-align:center"><span style="display:inline-block;transform:scaleX(0.895);transform-origin:center center;">4,884 €</span></div>
<div class="rv" style="left:331.48px;top:524.77px;width:48.26px;height:23.87px;line-height:23.87px;text-align:center"><span style="display:inline-block;transform:scaleX(0.895);transform-origin:center center;">2,495 €</span></div>
<div class="rv" style="left:379.74px;top:524.77px;width:48.26px;height:23.87px;line-height:23.87px;text-align:center"><span style="display:inline-block;transform:scaleX(0.895);transform-origin:center center;">5,474 €</span></div>
<div class="rv" style="left:428px;top:524.77px;width:48.26px;height:23.87px;line-height:23.87px;text-align:center"><span style="display:inline-block;transform:scaleX(0.895);transform-origin:center center;">6,959 €</span></div>
<div class="rv" style="left:476.26px;top:524.77px;width:48.26px;height:23.87px;line-height:23.87px;text-align:center"><span style="display:inline-block;transform:scaleX(0.895);transform-origin:center center;">1,804 €</span></div>
<div class="rv" style="left:524.52px;top:524.77px;width:48.26px;height:23.87px;line-height:23.87px;text-align:center"><span style="display:inline-block;transform:scaleX(0.895);transform-origin:center center;">6,581 €</span></div>
<div class="rv" style="left:572.78px;top:524.77px;width:48.26px;height:23.87px;line-height:23.87px;text-align:center"><span style="display:inline-block;transform:scaleX(0.895);transform-origin:center center;">7,938 €</span></div>
<div class="rv" style="left:621.04px;top:524.77px;width:48.26px;height:23.87px;line-height:23.87px;text-align:center"><span style="display:inline-block;transform:scaleX(0.895);transform-origin:center center;">1,563 €</span></div>
<div class="rv" style="left:669.3px;top:524.77px;width:48.26px;height:23.87px;line-height:23.87px;text-align:center"><span style="display:inline-block;transform:scaleX(0.895);transform-origin:center center;">2,678 €</span></div>
<div class="rv" style="left:717.56px;top:524.77px;width:48.26px;height:23.87px;line-height:23.87px;text-align:center"><span style="display:inline-block;transform:scaleX(0.895);transform-origin:center center;">4,157 €</span></div>
<div class="gbg" style="left:187.1px;top:550.64px;width:579.1px;height:27.27px"></div>
<div class="sep" style="left:20.8px;top:574.51px;width:163px;height:3.4px"></div>
<div class="sepg" style="left:188.8px;top:574.51px;width:577.4px;height:3.4px"></div>
<div class="bl" style="left:112px;top:552.04px;height:23.87px;line-height:23.87px;text-align:left"><span style="display:inline-block;transform:scaleX(0.935);transform-origin:left center;">Total</span></div>
<div class="bv" style="left:186.7px;top:552.04px;width:48.26px;height:23.87px;line-height:23.87px;text-align:center"><span style="display:inline-block;">9,455 €</span></div>
<div class="bv" style="left:234.96px;top:552.04px;width:48.26px;height:23.87px;line-height:23.87px;text-align:center"><span style="display:inline-block;">10,880 €</span></div>
<div class="bv" style="left:283.22px;top:552.04px;width:48.26px;height:23.87px;line-height:23.87px;text-align:center"><span style="display:inline-block;">7,946 €</span></div>
<div class="bv" style="left:331.48px;top:552.04px;width:48.26px;height:23.87px;line-height:23.87px;text-align:center"><span style="display:inline-block;">6,190 €</span></div>
<div class="bv" style="left:379.74px;top:552.04px;width:48.26px;height:23.87px;line-height:23.87px;text-align:center"><span style="display:inline-block;">12,906 €</span></div>
<div class="bv" style="left:428px;top:552.04px;width:48.26px;height:23.87px;line-height:23.87px;text-align:center"><span style="display:inline-block;">8,159 €</span></div>
<div class="bv" style="left:476.26px;top:552.04px;width:48.26px;height:23.87px;line-height:23.87px;text-align:center"><span style="display:inline-block;">8,651 €</span></div>
<div class="bv" style="left:524.52px;top:552.04px;width:48.26px;height:23.87px;line-height:23.87px;text-align:center"><span style="display:inline-block;">14,337 €</span></div>
<div class="bv" style="left:572.78px;top:552.04px;width:48.26px;height:23.87px;line-height:23.87px;text-align:center"><span style="display:inline-block;">9,808 €</span></div>
<div class="bv" style="left:621.04px;top:552.04px;width:48.26px;height:23.87px;line-height:23.87px;text-align:center"><span style="display:inline-block;">5,353 €</span></div>
<div class="bv" style="left:669.3px;top:552.04px;width:48.26px;height:23.87px;line-height:23.87px;text-align:center"><span style="display:inline-block;">10,570 €</span></div>
<div class="bv" style="left:717.56px;top:552.04px;width:48.26px;height:23.87px;line-height:23.87px;text-align:center"><span style="display:inline-block;">8,471 €</span></div>
<div class="gbg" style="left:187.1px;top:577.91px;width:579.1px;height:24.17px"></div>
<div class="bl" style="left:24.2px;top:579.31px;height:23.87px;line-height:23.87px;text-align:left"><span style="display:inline-block;transform:scaleX(0.935);transform-origin:left center;">Net Profit</span></div>
<div class="bv" style="left:186.7px;top:579.31px;width:48.26px;height:23.87px;line-height:23.87px;text-align:center"><span style="display:inline-block;">32,163 €</span></div>
<div class="bv" style="left:234.96px;top:579.31px;width:48.26px;height:23.87px;line-height:23.87px;text-align:center"><span style="display:inline-block;">21,500 €</span></div>
<div class="bv" style="left:283.22px;top:579.31px;width:48.26px;height:23.87px;line-height:23.87px;text-align:center"><span style="display:inline-block;">23,649 €</span></div>
<div class="bv" style="left:331.48px;top:579.31px;width:48.26px;height:23.87px;line-height:23.87px;text-align:center"><span style="display:inline-block;">3,710 €</span></div>
<div class="bv" style="left:379.74px;top:579.31px;width:48.26px;height:23.87px;line-height:23.87px;text-align:center"><span style="display:inline-block;">6,007 €</span></div>
<div class="bv" style="left:428px;top:579.31px;width:48.26px;height:23.87px;line-height:23.87px;text-align:center"><span style="display:inline-block;">8,203 €</span></div>
<div class="bv" style="left:476.26px;top:579.31px;width:48.26px;height:23.87px;line-height:23.87px;text-align:center"><span style="display:inline-block;">16,038 €</span></div>
<div class="bv" style="left:524.52px;top:579.31px;width:48.26px;height:23.87px;line-height:23.87px;text-align:center"><span style="display:inline-block;">19,612 €</span></div>
<div class="bv" style="left:572.78px;top:579.31px;width:48.26px;height:23.87px;line-height:23.87px;text-align:center"><span style="display:inline-block;">6,037 €</span></div>
<div class="bv" style="left:621.04px;top:579.31px;width:48.26px;height:23.87px;line-height:23.87px;text-align:center"><span style="display:inline-block;">8,151 €</span></div>
<div class="bv" style="left:669.3px;top:579.31px;width:48.26px;height:23.87px;line-height:23.87px;text-align:center"><span style="display:inline-block;">10,189 €</span></div>
<div class="bv" style="left:717.56px;top:579.31px;width:48.26px;height:23.87px;line-height:23.87px;text-align:center"><span style="display:inline-block;">-1,203 €</span></div>
<div class="vl" style="left:185.3px;top:223.4px;height:378.68px"></div>
<div class="hbg" style="left:809.2px;top:194px;width:364.8px;height:29.8px"></div>
<div class="ht" style="left:812.6px;top:192.4px;height:29.4px;line-height:29.4px;text-align:left"><span style="display:inline-block;transform:scaleX(0.9);transform-origin:left center;">Category</span></div>
<div class="ht" style="left:899.7px;top:192.4px;height:29.4px;line-height:29.4px;text-align:left"><span style="display:inline-block;transform:scaleX(0.9);transform-origin:left center;">Account</span></div>
<div class="ht" style="left:974.7px;top:192.4px;width:68.3px;height:29.4px;line-height:29.4px;text-align:center"><span style="display:inline-block;transform:scaleX(0.9);transform-origin:center center;">TY</span></div>
<div class="ht" style="left:1043px;top:192.4px;width:67px;height:29.4px;line-height:29.4px;text-align:center"><span style="display:inline-block;transform:scaleX(0.9);transform-origin:center center;">LY</span></div>
<div class="ht" style="left:1110px;top:192.4px;width:64px;height:29.4px;line-height:29.4px;text-align:center"><span style="display:inline-block;transform:scaleX(0.9);transform-origin:center center;">Delta</span></div>
<div class="sep" style="left:896.7px;top:247.27px;width:76.2px;height:3.4px"></div>
<div class="sep" style="left:976.6px;top:247.27px;width:197.4px;height:3.4px"></div>
<div class="bl" style="left:812.6px;top:224.8px;height:23.87px;line-height:23.87px;text-align:left"><span style="display:inline-block;transform:scaleX(0.935);transform-origin:left center;">Revenue</span></div>
<div class="rl" style="left:899.7px;top:224.8px;height:23.87px;line-height:23.87px;text-align:left"><span style="display:inline-block;transform:scaleX(0.94);transform-origin:left center;">Product Sales</span></div>
<div class="rv" style="left:974.7px;top:224.8px;width:64.9px;height:23.87px;line-height:23.87px;text-align:right"><span style="display:inline-block;transform:scaleX(0.895);transform-origin:right center;">159,492 €</span></div>
<div class="rv" style="left:1043px;top:224.8px;width:63.6px;height:23.87px;line-height:23.87px;text-align:right"><span style="display:inline-block;transform:scaleX(0.895);transform-origin:right center;">148,744 €</span></div>
<div class="rv" style="left:1110px;top:224.8px;width:60.6px;height:23.87px;line-height:23.87px;text-align:right"><span style="display:inline-block;transform:scaleX(0.895);transform-origin:right center;">10,748 €</span></div>
<div class="sep" style="left:896.7px;top:274.54px;width:76.2px;height:3.4px"></div>
<div class="sep" style="left:976.6px;top:274.54px;width:197.4px;height:3.4px"></div>
<div class="rl" style="left:899.7px;top:252.07px;height:23.87px;line-height:23.87px;text-align:left"><span style="display:inline-block;transform:scaleX(0.94);transform-origin:left center;">Service Revenue</span></div>
<div class="rv" style="left:974.7px;top:252.07px;width:64.9px;height:23.87px;line-height:23.87px;text-align:right"><span style="display:inline-block;transform:scaleX(0.895);transform-origin:right center;">128,910 €</span></div>
<div class="rv" style="left:1043px;top:252.07px;width:63.6px;height:23.87px;line-height:23.87px;text-align:right"><span style="display:inline-block;transform:scaleX(0.895);transform-origin:right center;">140,633 €</span></div>
<div class="rv" style="left:1110px;top:252.07px;width:60.6px;height:23.87px;line-height:23.87px;text-align:right"><span style="display:inline-block;transform:scaleX(0.895);transform-origin:right center;">-11,723 €</span></div>
<div class="sep" style="left:896.7px;top:301.81px;width:76.2px;height:3.4px"></div>
<div class="sep" style="left:976.6px;top:301.81px;width:197.4px;height:3.4px"></div>
<div class="rl" style="left:899.7px;top:279.34px;height:23.87px;line-height:23.87px;text-align:left"><span style="display:inline-block;transform:scaleX(0.94);transform-origin:left center;">Other Income</span></div>
<div class="rv" style="left:974.7px;top:279.34px;width:64.9px;height:23.87px;line-height:23.87px;text-align:right"><span style="display:inline-block;transform:scaleX(0.895);transform-origin:right center;">140,193 €</span></div>
<div class="rv" style="left:1043px;top:279.34px;width:63.6px;height:23.87px;line-height:23.87px;text-align:right"><span style="display:inline-block;transform:scaleX(0.895);transform-origin:right center;">133,930 €</span></div>
<div class="rv" style="left:1110px;top:279.34px;width:60.6px;height:23.87px;line-height:23.87px;text-align:right"><span style="display:inline-block;transform:scaleX(0.895);transform-origin:right center;">6,263 €</span></div>
<div class="gbg" style="left:974.9px;top:305.21px;width:199.1px;height:27.27px"></div>
<div class="sep" style="left:809.2px;top:329.08px;width:163.7px;height:3.4px"></div>
<div class="sepg" style="left:976.6px;top:329.08px;width:197.4px;height:3.4px"></div>
<div class="bl" style="left:899.7px;top:306.61px;height:23.87px;line-height:23.87px;text-align:left"><span style="display:inline-block;transform:scaleX(0.935);transform-origin:left center;">Total</span></div>
<div class="bv" style="left:974.7px;top:306.61px;width:64.9px;height:23.87px;line-height:23.87px;text-align:right"><span style="display:inline-block;">428,595 €</span></div>
<div class="bv" style="left:1043px;top:306.61px;width:63.6px;height:23.87px;line-height:23.87px;text-align:right"><span style="display:inline-block;">423,307 €</span></div>
<div class="bv" style="left:1110px;top:306.61px;width:60.6px;height:23.87px;line-height:23.87px;text-align:right"><span style="display:inline-block;">5,288 €</span></div>
<div class="sep" style="left:896.7px;top:356.35px;width:76.2px;height:3.4px"></div>
<div class="sep" style="left:976.6px;top:356.35px;width:197.4px;height:3.4px"></div>
<div class="bl" style="left:812.6px;top:333.88px;height:23.87px;line-height:23.87px;text-align:left"><span style="display:inline-block;transform:scaleX(0.935);transform-origin:left center;">COGS</span></div>
<div class="rl" style="left:899.7px;top:333.88px;height:23.87px;line-height:23.87px;text-align:left"><span style="display:inline-block;transform:scaleX(0.94);transform-origin:left center;">Materials</span></div>
<div class="rv" style="left:974.7px;top:333.88px;width:64.9px;height:23.87px;line-height:23.87px;text-align:right"><span style="display:inline-block;transform:scaleX(0.895);transform-origin:right center;">51,580 €</span></div>
<div class="rv" style="left:1043px;top:333.88px;width:63.6px;height:23.87px;line-height:23.87px;text-align:right"><span style="display:inline-block;transform:scaleX(0.895);transform-origin:right center;">50,793 €</span></div>
<div class="rv" style="left:1110px;top:333.88px;width:60.6px;height:23.87px;line-height:23.87px;text-align:right"><span style="display:inline-block;transform:scaleX(0.895);transform-origin:right center;">787 €</span></div>
<div class="sep" style="left:896.7px;top:383.62px;width:76.2px;height:3.4px"></div>
<div class="sep" style="left:976.6px;top:383.62px;width:197.4px;height:3.4px"></div>
<div class="rl" style="left:899.7px;top:361.15px;height:23.87px;line-height:23.87px;text-align:left"><span style="display:inline-block;transform:scaleX(0.94);transform-origin:left center;">Direct Labor</span></div>
<div class="rv" style="left:974.7px;top:361.15px;width:64.9px;height:23.87px;line-height:23.87px;text-align:right"><span style="display:inline-block;transform:scaleX(0.895);transform-origin:right center;">55,634 €</span></div>
<div class="rv" style="left:1043px;top:361.15px;width:63.6px;height:23.87px;line-height:23.87px;text-align:right"><span style="display:inline-block;transform:scaleX(0.895);transform-origin:right center;">51,799 €</span></div>
<div class="rv" style="left:1110px;top:361.15px;width:60.6px;height:23.87px;line-height:23.87px;text-align:right"><span style="display:inline-block;transform:scaleX(0.895);transform-origin:right center;">3,835 €</span></div>
<div class="sep" style="left:896.7px;top:410.89px;width:76.2px;height:3.4px"></div>
<div class="sep" style="left:976.6px;top:410.89px;width:197.4px;height:3.4px"></div>
<div class="rl" style="left:899.7px;top:388.42px;height:23.87px;line-height:23.87px;text-align:left"><span style="display:inline-block;transform:scaleX(0.94);transform-origin:left center;">Packaging</span></div>
<div class="rv" style="left:974.7px;top:388.42px;width:64.9px;height:23.87px;line-height:23.87px;text-align:right"><span style="display:inline-block;transform:scaleX(0.895);transform-origin:right center;">54,599 €</span></div>
<div class="rv" style="left:1043px;top:388.42px;width:63.6px;height:23.87px;line-height:23.87px;text-align:right"><span style="display:inline-block;transform:scaleX(0.895);transform-origin:right center;">58,313 €</span></div>
<div class="rv" style="left:1110px;top:388.42px;width:60.6px;height:23.87px;line-height:23.87px;text-align:right"><span style="display:inline-block;transform:scaleX(0.895);transform-origin:right center;">-3,714 €</span></div>
<div class="gbg" style="left:974.9px;top:414.29px;width:199.1px;height:27.27px"></div>
<div class="sep" style="left:809.2px;top:438.16px;width:163.7px;height:3.4px"></div>
<div class="sepg" style="left:976.6px;top:438.16px;width:197.4px;height:3.4px"></div>
<div class="bl" style="left:899.7px;top:415.69px;height:23.87px;line-height:23.87px;text-align:left"><span style="display:inline-block;transform:scaleX(0.935);transform-origin:left center;">Total</span></div>
<div class="bv" style="left:974.7px;top:415.69px;width:64.9px;height:23.87px;line-height:23.87px;text-align:right"><span style="display:inline-block;">161,813 €</span></div>
<div class="bv" style="left:1043px;top:415.69px;width:63.6px;height:23.87px;line-height:23.87px;text-align:right"><span style="display:inline-block;">160,905 €</span></div>
<div class="bv" style="left:1110px;top:415.69px;width:60.6px;height:23.87px;line-height:23.87px;text-align:right"><span style="display:inline-block;">908 €</span></div>
<div class="gbg" style="left:974.9px;top:441.56px;width:199.1px;height:27.27px"></div>
<div class="sep" style="left:809.2px;top:465.43px;width:163.7px;height:3.4px"></div>
<div class="sepg" style="left:976.6px;top:465.43px;width:197.4px;height:3.4px"></div>
<div class="bl" style="left:812.6px;top:442.96px;height:23.87px;line-height:23.87px;text-align:left"><span style="display:inline-block;transform:scaleX(0.935);transform-origin:left center;">Gross Profit</span></div>
<div class="bv" style="left:974.7px;top:442.96px;width:64.9px;height:23.87px;line-height:23.87px;text-align:right"><span style="display:inline-block;">266,782 €</span></div>
<div class="bv" style="left:1043px;top:442.96px;width:63.6px;height:23.87px;line-height:23.87px;text-align:right"><span style="display:inline-block;">262,402 €</span></div>
<div class="bv" style="left:1110px;top:442.96px;width:60.6px;height:23.87px;line-height:23.87px;text-align:right"><span style="display:inline-block;">4,380 €</span></div>
<div class="gbg" style="left:974.9px;top:468.83px;width:199.1px;height:27.27px"></div>
<div class="sep" style="left:809.2px;top:492.7px;width:163.7px;height:3.4px"></div>
<div class="sepg" style="left:976.6px;top:492.7px;width:197.4px;height:3.4px"></div>
<div class="bl" style="left:812.6px;top:470.23px;height:23.87px;line-height:23.87px;text-align:left"><span style="display:inline-block;transform:scaleX(0.935);transform-origin:left center;">Gross Profit %</span></div>
<div class="bv" style="left:974.7px;top:470.23px;width:64.9px;height:23.87px;line-height:23.87px;text-align:right"><span style="display:inline-block;">62.2%</span></div>
<div class="bv" style="left:1043px;top:470.23px;width:63.6px;height:23.87px;line-height:23.87px;text-align:right"><span style="display:inline-block;">62.0%</span></div>
<div class="bv" style="left:1110px;top:470.23px;width:60.6px;height:23.87px;line-height:23.87px;text-align:right"><span style="display:inline-block;">0.3%</span></div>
<div class="sep" style="left:896.7px;top:519.97px;width:76.2px;height:3.4px"></div>
<div class="sep" style="left:976.6px;top:519.97px;width:197.4px;height:3.4px"></div>
<div class="bl" style="left:812.6px;top:497.5px;height:23.87px;line-height:23.87px;text-align:left"><span style="display:inline-block;transform:scaleX(0.935);transform-origin:left center;">General Expenses</span></div>
<div class="rl" style="left:899.7px;top:497.5px;height:23.87px;line-height:23.87px;text-align:left"><span style="display:inline-block;transform:scaleX(0.94);transform-origin:left center;">Marketing</span></div>
<div class="rv" style="left:974.7px;top:497.5px;width:64.9px;height:23.87px;line-height:23.87px;text-align:right"><span style="display:inline-block;transform:scaleX(0.895);transform-origin:right center;">55,761 €</span></div>
<div class="rv" style="left:1043px;top:497.5px;width:63.6px;height:23.87px;line-height:23.87px;text-align:right"><span style="display:inline-block;transform:scaleX(0.895);transform-origin:right center;">47,432 €</span></div>
<div class="rv" style="left:1110px;top:497.5px;width:60.6px;height:23.87px;line-height:23.87px;text-align:right"><span style="display:inline-block;transform:scaleX(0.895);transform-origin:right center;">8,329 €</span></div>
<div class="sep" style="left:896.7px;top:547.24px;width:76.2px;height:3.4px"></div>
<div class="sep" style="left:976.6px;top:547.24px;width:197.4px;height:3.4px"></div>
<div class="rl" style="left:899.7px;top:524.77px;height:23.87px;line-height:23.87px;text-align:left"><span style="display:inline-block;transform:scaleX(0.94);transform-origin:left center;">Office Rent</span></div>
<div class="rv" style="left:974.7px;top:524.77px;width:64.9px;height:23.87px;line-height:23.87px;text-align:right"><span style="display:inline-block;transform:scaleX(0.895);transform-origin:right center;">56,965 €</span></div>
<div class="rv" style="left:1043px;top:524.77px;width:63.6px;height:23.87px;line-height:23.87px;text-align:right"><span style="display:inline-block;transform:scaleX(0.895);transform-origin:right center;">55,812 €</span></div>
<div class="rv" style="left:1110px;top:524.77px;width:60.6px;height:23.87px;line-height:23.87px;text-align:right"><span style="display:inline-block;transform:scaleX(0.895);transform-origin:right center;">1,153 €</span></div>
<div class="gbg" style="left:974.9px;top:550.64px;width:199.1px;height:27.27px"></div>
<div class="sep" style="left:809.2px;top:574.51px;width:163.7px;height:3.4px"></div>
<div class="sepg" style="left:976.6px;top:574.51px;width:197.4px;height:3.4px"></div>
<div class="bl" style="left:899.7px;top:552.04px;height:23.87px;line-height:23.87px;text-align:left"><span style="display:inline-block;transform:scaleX(0.935);transform-origin:left center;">Total</span></div>
<div class="bv" style="left:974.7px;top:552.04px;width:64.9px;height:23.87px;line-height:23.87px;text-align:right"><span style="display:inline-block;">112,726 €</span></div>
<div class="bv" style="left:1043px;top:552.04px;width:63.6px;height:23.87px;line-height:23.87px;text-align:right"><span style="display:inline-block;">103,244 €</span></div>
<div class="bv" style="left:1110px;top:552.04px;width:60.6px;height:23.87px;line-height:23.87px;text-align:right"><span style="display:inline-block;">9,482 €</span></div>
<div class="gbg" style="left:974.9px;top:577.91px;width:199.1px;height:24.17px"></div>
<div class="bl" style="left:812.6px;top:579.31px;height:23.87px;line-height:23.87px;text-align:left"><span style="display:inline-block;transform:scaleX(0.935);transform-origin:left center;">Net Profit</span></div>
<div class="bv" style="left:974.7px;top:579.31px;width:64.9px;height:23.87px;line-height:23.87px;text-align:right"><span style="display:inline-block;">154,056 €</span></div>
<div class="bv" style="left:1043px;top:579.31px;width:63.6px;height:23.87px;line-height:23.87px;text-align:right"><span style="display:inline-block;">159,158 €</span></div>
<div class="bv" style="left:1110px;top:579.31px;width:60.6px;height:23.87px;line-height:23.87px;text-align:right"><span style="display:inline-block;">-5,102 €</span></div>
<div class="vl" style="left:973.1px;top:223.4px;height:378.68px"></div>
</body></html>
